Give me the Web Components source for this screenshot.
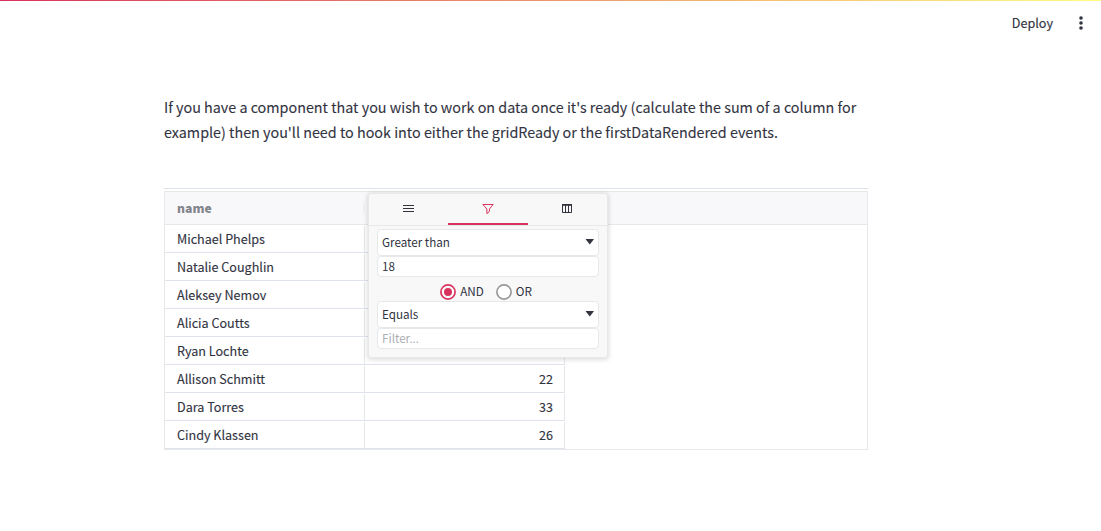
<!DOCTYPE html>
<html lang="en">
<head>
<meta charset="utf-8">
<title>Grid events</title>
<style>
html, body { margin: 0; height: 100%; overflow: hidden; background: #fff; }
body { font-family: "Noto Sans CJK SC", "Noto Sans", sans-serif; color: #31333f; }
</style>
</head>
<body>
<demo-app></demo-app>
<script>
const define = (name, html, setup) => customElements.define(name, class extends HTMLElement {
  constructor() {
    super();
    const t = document.createElement('template');
    t.innerHTML = html;
    this.attachShadow({ mode: 'open' }).append(t.content.cloneNode(true));
  }
  connectedCallback() { if (setup) setup(this, this.shadowRoot); }
});

define('app-toolbar', `<style>
:host { display: block; height: 46px; }
.bar { height: 1px; background: linear-gradient(90deg, #d9325c, #fffd80); }
.row { display: flex; justify-content: flex-end; align-items: center; height: 43px; padding-right: 12px; gap: 20px; }
span { font-size: 12.6px; line-height: 20px; font-weight: 400; -webkit-text-stroke: .15px currentColor; }
svg { display: block; width: 16px; height: 16px; margin-top: 1px; }
</style>
<div class="bar"></div>
<div class="row"><span>Deploy</span>
<svg viewBox="0 0 16 16" fill="#31333f"><circle cx="8" cy="3" r="1.8"/><circle cx="8" cy="8" r="1.8"/><circle cx="8" cy="13" r="1.8"/></svg></div>`);

define('grid-header', `<style>
:host { display: flex; height: 32px; background: #f8f8fb; border-bottom: 1px solid #e6e8ea; }
.cell { box-sizing: border-box; width: 200px; padding-left: 12px; display: flex; align-items: center; justify-content: space-between; font-size: 12.2px; line-height: 20px; font-weight: 700; color: #83858c; }
i { width: 2px; height: 10px; background: #f0f1f4; }
</style>
<div class="cell"><b><slot></slot></b><i></i></div>`);

define('grid-row', `<style>
:host { display: flex; box-sizing: border-box; width: 400px; height: 28px; border-bottom: 1px solid #dde2eb; font-size: 12.58px; -webkit-text-stroke: .12px currentColor; }
div { box-sizing: border-box; width: 200px; height: 26px; margin-top: 1px; line-height: 25px; border-right: 1px solid #e4e6ea; padding: 0 11px 0 12px; white-space: nowrap; }
.age { text-align: right; }
</style>
<div><slot></slot></div><div class="age"><slot name="age"></slot></div>`);

define('filter-select', `<style>
:host { display: flex; box-sizing: border-box; height: 27px; align-items: center; justify-content: space-between; padding: 0 4px 2px; border: 1px solid #e6e8ea; border-radius: 4px; background: #fff; font-size: 11.65px; line-height: 18px; }
svg { width: 9px; height: 6px; display: block; }
</style>
<span><slot></slot></span><svg viewBox="0 0 9 6"><path d="M.5 0H9L4.8 5.5Z" fill="#31333f"/></svg>`);

define('filter-input', `<style>
:host { display: block; box-sizing: border-box; height: 21px; padding: 0 4px; border: 1px solid #e6e8ea; border-radius: 4px; background: #fff; font-size: 11.65px; line-height: 18px; }
:host([empty]) { color: #adaeb2; }
</style><slot></slot>`);

define('filter-radio', `<style>
:host { display: flex; align-items: flex-start; gap: 4px; font-size: 11.7px; line-height: 13px; }
svg { width: 16px; height: 16px; display: block; }
circle { fill: #fff; stroke: #999; stroke-width: 1.7; }
.dot { display: none; }
:host([checked]) circle { stroke: #d9325c; }
:host([checked]) .dot { display: block; fill: #d9325c; stroke: none; }
</style><svg viewBox="0 0 16 16"><circle cx="8" cy="8" r="7.1"/><circle class="dot" cx="8" cy="8" r="4"/></svg><span><slot></slot></span>`);

define('column-menu', `<style>
:host { display: block; box-sizing: border-box; width: 240px; height: 165px; background: #f8f8f8; border: 1px solid #e6e8ea; border-radius: 3px; box-shadow: 0 1px 4px 1px rgba(0,0,0,.13); }
.tabs { display: flex; height: 31px; border-bottom: 1px solid #e6e8ea; margin: 0 -1px; }
.tab { box-sizing: border-box; width: 80px; height: 31px; padding-top: 9px; border-bottom: 2px solid transparent; display: flex; justify-content: center; }
.tab.on { border-color: #d9325c; }
svg { display: block; width: 12px; height: 12px; fill: none; stroke: #31333f; }
.body { padding: 3px 8px; }
.join { display: flex; justify-content: center; gap: 12px; height: 24px; padding: 7px 4px 0 0; box-sizing: border-box; }
</style>
<div class="tabs">
<div class="tab"><svg viewBox="0 0 12 12"><path d="M1 2.5h11M1 5.5h11M1 8.5h11"/></svg></div>
<div class="tab on"><svg viewBox="0 0 12 12" style="stroke:#d9325c"><path d="M.9 1.5H11.1L7.4 6V8.5L4.9 10.6V6Z"/></svg></div>
<div class="tab"><svg viewBox="0 0 12 12"><path d="M.5 2V9.5H9.5V2M3.5 2V9.5M6.5 2V9.5"/><path d="M0 1.9H10" stroke-width="1.8"/></svg></div>
</div>
<div class="body">
<filter-select>Greater than</filter-select><filter-input>18</filter-input>
<div class="join"><filter-radio checked>AND</filter-radio><filter-radio>OR</filter-radio></div>
<filter-select>Equals</filter-select><filter-input empty>Filter...</filter-input>
</div>`);

define('data-grid', `<style>
:host { display: block; position: relative; box-sizing: border-box; width: 704px; height: 259px; border: 1px solid #e6e8ea; }
column-menu { position: absolute; left: 203px; top: 1px; }
</style><grid-header>name</grid-header><div class="rows"></div><column-menu></column-menu>`, (el, root) => {
  const rows = [['Michael Phelps'], ['Natalie Coughlin'], ['Aleksey Nemov'], ['Alicia Coutts'], ['Ryan Lochte'], ['Allison Schmitt', 22], ['Dara Torres', 33], ['Cindy Klassen', 26]];
  rows.forEach(([name, age]) => {
    const row = document.createElement('grid-row');
    row.textContent = name;
    if (age) {
      const a = document.createElement('span');
      a.slot = 'age';
      a.textContent = age;
      row.append(a);
    }
    root.querySelector('.rows').append(row);
  });
});

define('demo-app', `<style>
:host { display: block; }
main { width: 704px; margin-left: 164px; padding-top: 48px; }
p { margin: 0; font-size: 14.33px; line-height: 25px; white-space: nowrap; -webkit-text-stroke: .1px currentColor; }
.frame { margin-top: 44px; border-top: 1px solid #dde2eb; padding-top: 2px; }
</style>
<app-toolbar></app-toolbar>
<main><p>If you have a component that you wish to work on data once it's ready (calculate the sum of a column for<br>example) then you'll need to hook into either the gridReady or the firstDataRendered events.</p>
<div class="frame"><data-grid></data-grid></div></main>`);
</script>
</body>
</html>
